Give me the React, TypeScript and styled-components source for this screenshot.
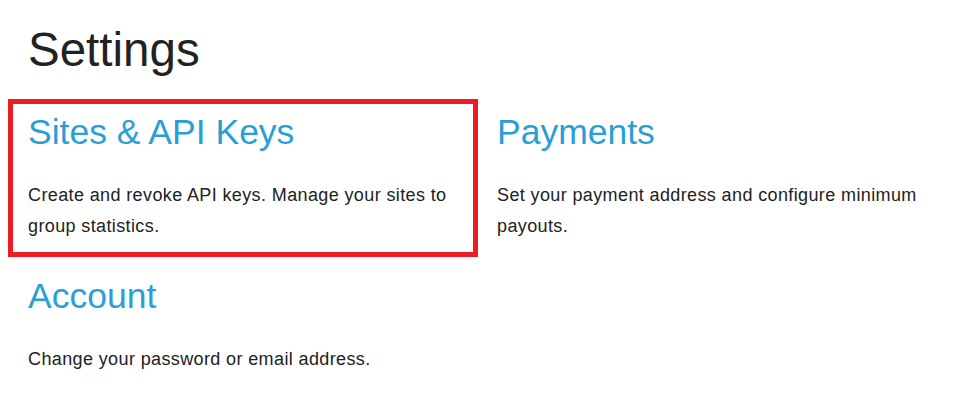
import React from "react";
import styled, { createGlobalStyle } from "styled-components";

const GlobalStyle = createGlobalStyle`
  body {
    margin: 0;
    background: #fff;
    font-family: "Liberation Sans", Arial, sans-serif;
    color: #222;
  }
`;

const Page = styled.div`
  padding: 8px 0 0 13px;
`;

const Title = styled.h1`
  margin: 16px 0 0 15px;
  font-size: 47.5px;
  font-weight: 400;
  line-height: 1.1;
  color: #222;
`;

const Grid = styled.div`
  display: grid;
  grid-template-columns: 460px 460px;
  column-gap: 9px;
  row-gap: 16px;
  margin-top: 28px;
`;

const Card = styled.a<{ $active?: boolean }>`
  display: block;
  padding: 9px 15px 10px;
  text-decoration: none;
  outline: ${p => (p.$active ? "5px solid #ed1c24" : "none")};
`;

const CardTitle = styled.h2`
  margin: 0;
  font-size: 35.5px;
  font-weight: 400;
  line-height: 1.1;
  color: #2a9fd6;
`;

const CardText = styled.p`
  margin: 28px 0 0;
  font-size: 18px;
  letter-spacing: 0.38px;
  line-height: 31px;
  color: #222;
`;

const sections = [
  {
    title: "Sites & API Keys",
    text: "Create and revoke API keys. Manage your sites to group statistics.",
    active: true,
  },
  {
    title: "Payments",
    text: "Set your payment address and configure minimum payouts.",
  },
  {
    title: "Account",
    text: "Change your password or email address.",
  },
];

const App: React.FC = () => (
  <Page>
    <GlobalStyle />
    <Title>Settings</Title>
    <Grid>
      {sections.map(s => (
        <Card key={s.title} href="#" $active={s.active}>
          <CardTitle>{s.title}</CardTitle>
          <CardText>{s.text}</CardText>
        </Card>
      ))}
    </Grid>
  </Page>
);

export default App;
